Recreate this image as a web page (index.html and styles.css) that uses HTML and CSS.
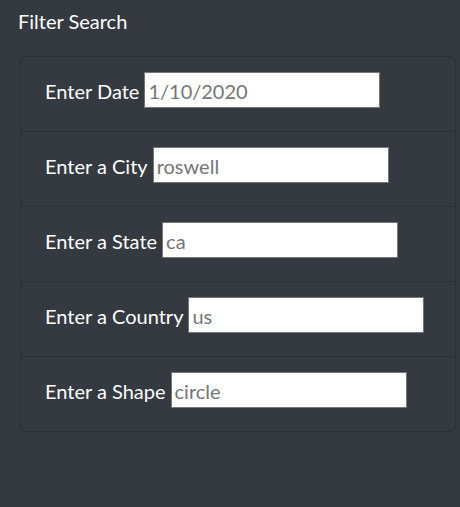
FILE: index.html
```html
<!DOCTYPE html>
<html lang="en">
<head>
<meta charset="utf-8">
<title>Filter Search</title>
<link rel="stylesheet" href="styles.css">
</head>
<body>
<div class="panel">
  <h5 class="panel-title">Filter Search</h5>
  <ul class="list-group">
    <li class="list-group-item">
      <label class="field-label" for="datetime">Enter Date</label>
      <input class="field-input" id="datetime" type="text" placeholder="1/10/2020">
    </li>
    <li class="list-group-item">
      <label class="field-label" for="city">Enter a City</label>
      <input class="field-input" id="city" type="text" placeholder="roswell">
    </li>
    <li class="list-group-item">
      <label class="field-label" for="state">Enter a State</label>
      <input class="field-input" id="state" type="text" placeholder="ca">
    </li>
    <li class="list-group-item">
      <label class="field-label" for="country">Enter a Country</label>
      <input class="field-input" id="country" type="text" placeholder="us">
    </li>
    <li class="list-group-item">
      <label class="field-label" for="shape">Enter a Shape</label>
      <input class="field-input" id="shape" type="text" placeholder="circle">
    </li>
  </ul>
</div>
</body>
</html>
```
FILE: styles.css
```css
html, body {
  margin: 0;
  padding: 0;
  background: #343a40;
  height: 100%;
}
body {
  font-family: Lato, "Segoe UI", Roboto, sans-serif;
  font-size: 20px;
  line-height: 1.5;
  color: #fff;
}
.panel {
  padding: 6px 0 0 0;
}
.panel-title {
  margin: 0 0 20px 0;
  padding-left: 18px;
  font-size: 20px;
  font-weight: 400;
  line-height: 30px;
}
.list-group {
  list-style: none;
  margin: 0 0 0 20px;
  padding: 0;
  width: 436px;
  box-sizing: border-box;
  border: 1px solid #2c3136;
  border-radius: 5px;
}
.list-group-item {
  display: flex;
  align-items: baseline;
  height: 75px;
  box-sizing: border-box;
  padding: 15px 24px 0 24px;
  border-top: 1px solid #2c3136;
}
.list-group-item:first-child {
  height: 74px;
  border-top: none;
}
.field-label {
  margin-right: 5px;
  white-space: nowrap;
}
.field-input {
  width: 236px;
  height: 36px;
  box-sizing: border-box;
  margin: 0;
  padding: 2px 3px 0 3px;
  border: 1px solid #767676;
  border-radius: 0;
  background: #fff;
  font-family: Lato, "Segoe UI", Roboto, sans-serif;
  font-size: 20px;
  color: #495057;
  outline: none;
}
.field-input::placeholder {
  color: #757575;
  opacity: 1;
}
```
